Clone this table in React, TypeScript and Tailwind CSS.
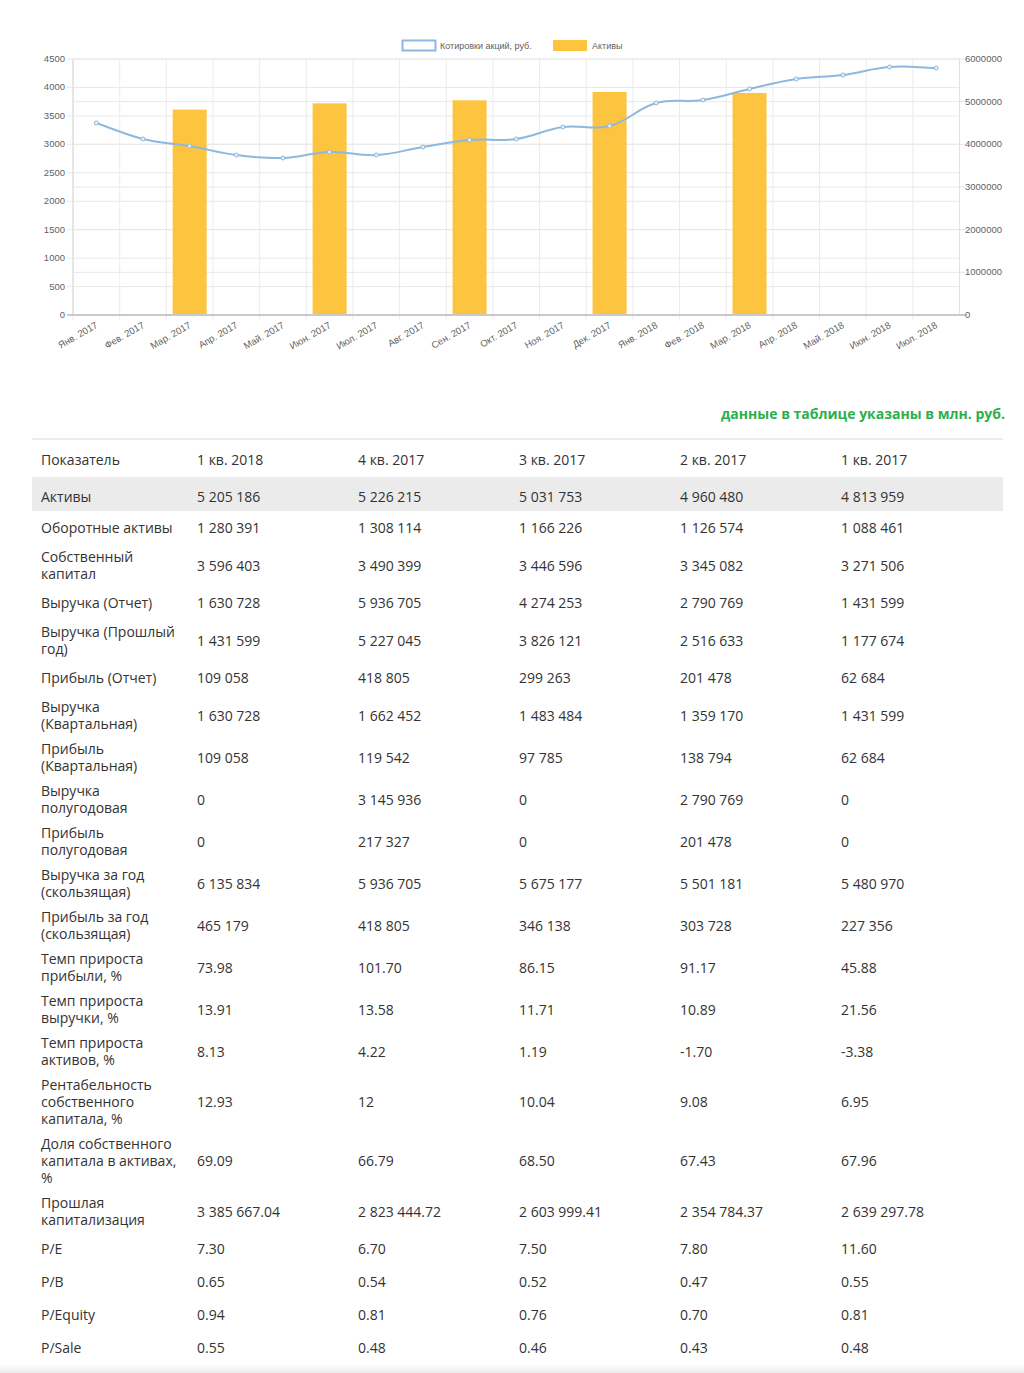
const months = [
  'Янв. 2017', 'Фев. 2017', 'Мар. 2017', 'Апр. 2017', 'Май. 2017', 'Июн. 2017', 'Июл. 2017',
  'Авг. 2017', 'Сен. 2017', 'Окт. 2017', 'Ноя. 2017', 'Дек. 2017', 'Янв. 2018', 'Фев. 2018',
  'Мар. 2018', 'Апр. 2018', 'Май. 2018', 'Июн. 2018', 'Июл. 2018',
];

const quotes = [3375, 3094, 2970, 2812, 2760, 2865, 2812, 2953, 3076, 3094, 3305, 3322, 3727, 3779, 3973, 4148, 4219, 4359, 4342];

const assets: { [k: number]: number } = {
  2: 4813959,
  5: 4960480,
  8: 5031753,
  11: 5226215,
  14: 5205186,
};

// plot area
const X0 = 73;
const X1 = 959.5;
const TOP = 59;
const BOTTOM = 315;
const CW = (X1 - X0) / months.length;
const H = BOTTOM - TOP;

const yLeft = (v: number) => BOTTOM - (v / 4500) * H;
const yRight = (v: number) => BOTTOM - (v / 6000000) * H;

const splinePath = (pts: [number, number][], t = 0.4) => {
  const cps = pts.map((p, i) => {
    const prev = pts[i - 1] || p;
    const next = pts[i + 1] || p;
    const d01 = Math.hypot(p[0] - prev[0], p[1] - prev[1]);
    const d12 = Math.hypot(next[0] - p[0], next[1] - p[1]);
    const sum = d01 + d12 || 1;
    const fa = (t * d01) / sum;
    const fb = (t * d12) / sum;
    return {
      prev: [p[0] - fa * (next[0] - prev[0]), p[1] - fa * (next[1] - prev[1])],
      next: [p[0] + fb * (next[0] - prev[0]), p[1] + fb * (next[1] - prev[1])],
    };
  });
  let d = `M${pts[0][0]},${pts[0][1]}`;
  for (let i = 1; i < pts.length; i++) {
    const a = cps[i - 1].next;
    const b = cps[i].prev;
    d += ` C${a[0]},${a[1]} ${b[0]},${b[1]} ${pts[i][0]},${pts[i][1]}`;
  }
  return d;
};

const Chart = () => {
  const pts: [number, number][] = quotes.map((v, i) => [X0 + CW * (i + 0.5), yLeft(v)]);
  const leftTicks = [0, 500, 1000, 1500, 2000, 2500, 3000, 3500, 4000, 4500];
  const rightTicks = [0, 1000000, 2000000, 3000000, 4000000, 5000000, 6000000];

  return (
    <svg width="1024" height="404" className="block" fontFamily="'Liberation Sans', Arial, sans-serif">
      {/* legend */}
      <rect x="402.5" y="40.5" width="33" height="10" fill="#fff" stroke="#8db8df" strokeWidth="2" />
      <text x="440" y="49" fontSize="9" fill="#5f5f5f">Котировки акций, руб.</text>
      <rect x="553" y="40" width="34" height="11" fill="#fcc43f" />
      <text x="592" y="49" fontSize="9" fill="#5f5f5f">Активы</text>

      {/* grid */}
      {leftTicks.map((v) => (
        <line key={'l' + v} x1={X0 - 6} x2={X1} y1={yLeft(v)} y2={yLeft(v)} stroke="#e8e8e8" strokeWidth="1" />
      ))}
      {rightTicks.map((v) => (
        <line key={'r' + v} x1={X0} x2={X1 + 6} y1={yRight(v)} y2={yRight(v)} stroke="#e8e8e8" strokeWidth="1" />
      ))}
      {months.map((m, i) => (
        <line key={m} x1={X0 + CW * i} x2={X0 + CW * i} y1={TOP} y2={BOTTOM + 5} stroke="#ececec" strokeWidth="1" />
      ))}
      <line x1={X1} x2={X1} y1={TOP} y2={BOTTOM} stroke="#e2e2e2" strokeWidth="1" />
      <line x1={X0} x2={X0} y1={TOP} y2={BOTTOM} stroke="#d6d6d6" strokeWidth="1" />
      <line x1={X0 - 6} x2={X1 + 6} y1={BOTTOM} y2={BOTTOM} stroke="#c9c9c9" strokeWidth="2" />

      {/* y labels */}
      {leftTicks.map((v) => (
        <text key={'lt' + v} x="65" y={yLeft(v) + 3} fontSize="9.5" fill="#5f5f5f" textAnchor="end">
          {v}
        </text>
      ))}
      {rightTicks.map((v) => (
        <text key={'rt' + v} x="965" y={yRight(v) + 3} fontSize="9.5" fill="#5f5f5f">
          {v}
        </text>
      ))}

      {/* bars */}
      {Object.keys(assets).map((k) => {
        const i = Number(k);
        const y = yRight(assets[i]);
        return <rect key={k} x={X0 + CW * i + (CW - 34) / 2} y={y} width="34" height={BOTTOM - 1 - y} fill="#fcc43f" />;
      })}

      {/* line */}
      <path d={splinePath(pts)} fill="none" stroke="#8db8df" strokeWidth="2" />
      {pts.map((p, i) => (
        <circle key={i} cx={p[0]} cy={p[1]} r="2" fill="#e6f0f9" stroke="#8db8df" strokeWidth="1" />
      ))}

      {/* x labels */}
      {months.map((m, i) => {
        const ax = X0 + CW * (i + 0.5) + 2;
        const ay = 327;
        return (
          <text key={'x' + m} x={ax} y={ay} fontSize="9.5" fill="#5f5f5f" textAnchor="end" transform={`rotate(-30 ${ax} ${ay})`}>
            {m}
          </text>
        );
      })}
    </svg>
  );
};

const rows: [string[], string, string, string, string, string][] = [
  [['Активы'], '5 205 186', '5 226 215', '5 031 753', '4 960 480', '4 813 959'],
  [['Оборотные активы'], '1 280 391', '1 308 114', '1 166 226', '1 126 574', '1 088 461'],
  [['Собственный', 'капитал'], '3 596 403', '3 490 399', '3 446 596', '3 345 082', '3 271 506'],
  [['Выручка (Отчет)'], '1 630 728', '5 936 705', '4 274 253', '2 790 769', '1 431 599'],
  [['Выручка (Прошлый', 'год)'], '1 431 599', '5 227 045', '3 826 121', '2 516 633', '1 177 674'],
  [['Прибыль (Отчет)'], '109 058', '418 805', '299 263', '201 478', '62 684'],
  [['Выручка', '(Квартальная)'], '1 630 728', '1 662 452', '1 483 484', '1 359 170', '1 431 599'],
  [['Прибыль', '(Квартальная)'], '109 058', '119 542', '97 785', '138 794', '62 684'],
  [['Выручка', 'полугодовая'], '0', '3 145 936', '0', '2 790 769', '0'],
  [['Прибыль', 'полугодовая'], '0', '217 327', '0', '201 478', '0'],
  [['Выручка за год', '(скользящая)'], '6 135 834', '5 936 705', '5 675 177', '5 501 181', '5 480 970'],
  [['Прибыль за год', '(скользящая)'], '465 179', '418 805', '346 138', '303 728', '227 356'],
  [['Темп прироста', 'прибыли, %'], '73.98', '101.70', '86.15', '91.17', '45.88'],
  [['Темп прироста', 'выручки, %'], '13.91', '13.58', '11.71', '10.89', '21.56'],
  [['Темп прироста', 'активов, %'], '8.13', '4.22', '1.19', '-1.70', '-3.38'],
  [['Рентабельность', 'собственного', 'капитала, %'], '12.93', '12', '10.04', '9.08', '6.95'],
  [['Доля собственного', 'капитала в активах,', '%'], '69.09', '66.79', '68.50', '67.43', '67.96'],
  [['Прошлая', 'капитализация'], '3 385 667.04', '2 823 444.72', '2 603 999.41', '2 354 784.37', '2 639 297.78'],
  [['P/E'], '7.30', '6.70', '7.50', '7.80', '11.60'],
  [['P/B'], '0.65', '0.54', '0.52', '0.47', '0.55'],
  [['P/Equity'], '0.94', '0.81', '0.76', '0.70', '0.81'],
  [['P/Sale'], '0.55', '0.48', '0.46', '0.43', '0.48'],
];

const headers = ['Показатель', '1 кв. 2018', '4 кв. 2017', '3 кв. 2017', '2 кв. 2017', '1 кв. 2017'];

export default function App() {
  return (
    <div className="w-[1024px] bg-white font-['Open_Sans','Noto_Sans',sans-serif] text-[#333]">
      <Chart />

      <div className="flex justify-end pr-[19px] text-[14px] font-bold leading-[20px] text-[#2daf4b]">
        данные в таблице указаны в млн. руб.
      </div>

      <table className="mx-[32px] mt-[14px] w-[971px] table-fixed border-collapse border-t-2 border-[#ececec] text-[14px] leading-[17px]">
        <colgroup>
          <col className="w-[156px]" />
          <col className="w-[161px]" />
          <col className="w-[161px]" />
          <col className="w-[161px]" />
          <col className="w-[161px]" />
          <col className="w-[171px]" />
        </colgroup>
        <thead>
          <tr>
            {headers.map((h) => (
              <th key={h} className="h-[38px] whitespace-nowrap pl-[9px] pt-[2px] text-left align-middle font-normal">
                {h}
              </th>
            ))}
          </tr>
        </thead>
        <tbody>
          {rows.map(([label, ...vals], r) => (
            <tr key={label.join(' ')} className={r === 0 ? 'bg-[#ebebeb]' : ''}>
              <td className={`${r === 0 ? 'h-[34px] pt-[6px] pb-[2px]' : 'h-[33px] py-[4px]'} whitespace-nowrap pl-[9px] align-middle`}>
                {label.map((l, i) => (
                  <div key={i}>{l}</div>
                ))}
              </td>
              {vals.map((v, i) => (
                <td key={i} className={`${r === 0 ? 'pt-[6px] pb-[2px]' : 'py-[4px]'} whitespace-nowrap pl-[9px] align-middle`}>
                  {v}
                </td>
              ))}
            </tr>
          ))}
        </tbody>
      </table>
      <div className="h-[12px] bg-gradient-to-b from-white to-[#e4e4e4]" />
    </div>
  );
}
